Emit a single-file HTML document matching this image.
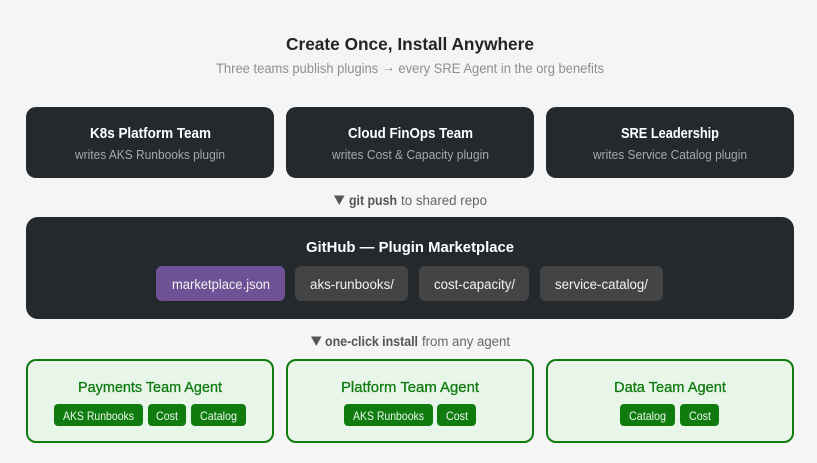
<!DOCTYPE html>
<html lang="en">
<head>
<meta charset="utf-8">
<title>Create Once, Install Anywhere</title>
<style>
html,body{margin:0;padding:0;background:#f5f5f5;width:817px;height:463px;overflow:hidden}
svg{display:block;position:absolute;left:0;top:0}
text{font-family:"Liberation Sans",sans-serif;text-anchor:start}
.b{font-weight:700}
</style>
</head>
<body>
<svg width="817" height="463" viewBox="0 0 817 463" xmlns="http://www.w3.org/2000/svg">
<rect width="817" height="463" fill="#f5f5f5"/>
<text class="b" x="286" y="50" font-size="17.5" fill="#242424" textLength="248" lengthAdjust="spacingAndGlyphs">Create Once, Install Anywhere</text>
<text x="216" y="73" font-size="13.5" fill="#8f8f8f" textLength="388" lengthAdjust="spacingAndGlyphs">Three teams publish plugins <tspan dy="-1.5">→</tspan><tspan dy="1.5"> every SRE Agent in the org benefits</tspan></text>

<rect x="26" y="107" width="248" height="71" rx="10" fill="#24292e"/>
<rect x="286" y="107" width="248" height="71" rx="10" fill="#24292e"/>
<rect x="546" y="107" width="248" height="71" rx="10" fill="#24292e"/>
<text class="b" x="90" y="138" font-size="15" fill="#fff" textLength="121" lengthAdjust="spacingAndGlyphs">K8s Platform Team</text>
<text x="75" y="159" font-size="12.5" fill="#a6a8aa" textLength="150" lengthAdjust="spacingAndGlyphs">writes AKS Runbooks plugin</text>
<text class="b" x="348" y="138" font-size="15" fill="#fff" textLength="125" lengthAdjust="spacingAndGlyphs">Cloud FinOps Team</text>
<text x="332" y="159" font-size="12.5" fill="#a6a8aa" textLength="157" lengthAdjust="spacingAndGlyphs">writes Cost &amp; Capacity plugin</text>
<text class="b" x="621" y="138" font-size="15" fill="#fff" textLength="98" lengthAdjust="spacingAndGlyphs">SRE Leadership</text>
<text x="593" y="159" font-size="12.5" fill="#a6a8aa" textLength="154" lengthAdjust="spacingAndGlyphs">writes Service Catalog plugin</text>

<path d="M334 195.500h10.500l-5.250 9.500z" fill="#555"/>
<text class="b" x="349" y="205" font-size="13.5" fill="#555" textLength="48" lengthAdjust="spacingAndGlyphs">git push</text>
<text x="401" y="205" font-size="13.5" fill="#666" textLength="86" lengthAdjust="spacingAndGlyphs">to shared repo</text>

<rect x="26" y="217" width="768" height="102" rx="12" fill="#24292e"/>
<text class="b" x="306" y="252" font-size="15" fill="#fff" textLength="208" lengthAdjust="spacingAndGlyphs">GitHub — Plugin Marketplace</text>
<rect x="156" y="266" width="129" height="35" rx="6" fill="#6f5295"/>
<rect x="295" y="266" width="113" height="35" rx="6" fill="#444"/>
<rect x="419" y="266" width="110" height="35" rx="6" fill="#444"/>
<rect x="540" y="266" width="123" height="35" rx="6" fill="#444"/>
<text x="172" y="289" font-size="13.5" fill="#f2f2f2" textLength="98" lengthAdjust="spacingAndGlyphs">marketplace.json</text>
<text x="310" y="289" font-size="13.5" fill="#f2f2f2" textLength="84" lengthAdjust="spacingAndGlyphs">aks-runbooks/</text>
<text x="434" y="289" font-size="13.5" fill="#f2f2f2" textLength="81" lengthAdjust="spacingAndGlyphs">cost-capacity/</text>
<text x="555" y="289" font-size="13.5" fill="#f2f2f2" textLength="93" lengthAdjust="spacingAndGlyphs">service-catalog/</text>

<path d="M311 336.500h10.500l-5.250 9.500z" fill="#555"/>
<text class="b" x="325" y="346" font-size="13.5" fill="#555" textLength="93" lengthAdjust="spacingAndGlyphs">one-click install</text>
<text x="422" y="346" font-size="13.5" fill="#666" textLength="88" lengthAdjust="spacingAndGlyphs">from any agent</text>

<rect x="27" y="360" width="246" height="82" rx="9" fill="#e8f5e9" stroke="#107c10" stroke-width="2"/>
<rect x="287" y="360" width="246" height="82" rx="9" fill="#e8f5e9" stroke="#107c10" stroke-width="2"/>
<rect x="547" y="360" width="246" height="82" rx="9" fill="#e8f5e9" stroke="#107c10" stroke-width="2"/>
<text x="78" y="392" font-size="14.5" fill="#107c10" stroke="#107c10" stroke-width=".3" textLength="144" lengthAdjust="spacingAndGlyphs">Payments Team Agent</text>
<text x="341" y="392" font-size="14.5" fill="#107c10" stroke="#107c10" stroke-width=".3" textLength="138" lengthAdjust="spacingAndGlyphs">Platform Team Agent</text>
<text x="614" y="392" font-size="14.5" fill="#107c10" stroke="#107c10" stroke-width=".3" textLength="112" lengthAdjust="spacingAndGlyphs">Data Team Agent</text>

<g fill="#107c10">
<rect x="54" y="404" width="89" height="22" rx="4"/>
<rect x="148" y="404" width="38" height="22" rx="4"/>
<rect x="191" y="404" width="55" height="22" rx="4"/>
<rect x="344" y="404" width="89" height="22" rx="4"/>
<rect x="437" y="404" width="39" height="22" rx="4"/>
<rect x="620" y="404" width="55" height="22" rx="4"/>
<rect x="680" y="404" width="39" height="22" rx="4"/>
</g>
<g font-size="12" fill="#eef7ee">
<text x="63" y="420" textLength="71" lengthAdjust="spacingAndGlyphs">AKS Runbooks</text>
<text x="156" y="420" textLength="22" lengthAdjust="spacingAndGlyphs">Cost</text>
<text x="200" y="420" textLength="37" lengthAdjust="spacingAndGlyphs">Catalog</text>
<text x="353" y="420" textLength="71" lengthAdjust="spacingAndGlyphs">AKS Runbooks</text>
<text x="446" y="420" textLength="22" lengthAdjust="spacingAndGlyphs">Cost</text>
<text x="629" y="420" textLength="37" lengthAdjust="spacingAndGlyphs">Catalog</text>
<text x="689" y="420" textLength="22" lengthAdjust="spacingAndGlyphs">Cost</text>
</g>
</svg>
</body>
</html>
